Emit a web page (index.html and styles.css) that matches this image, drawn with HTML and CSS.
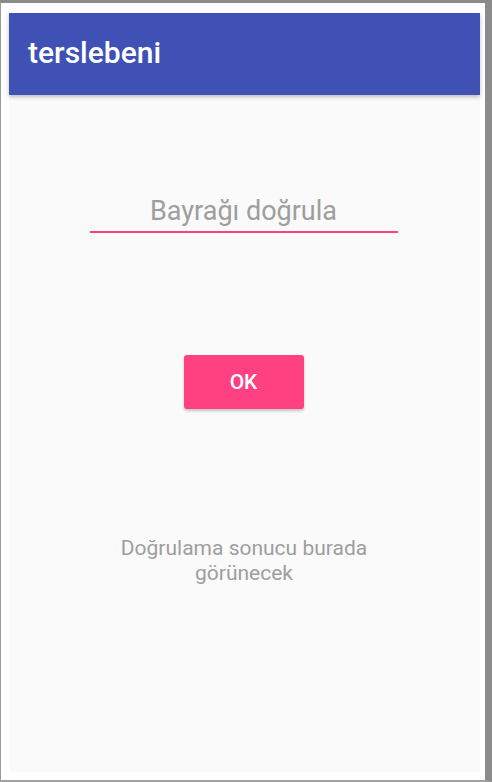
FILE: index.html
```html
<!DOCTYPE html>
<html lang="tr">
<head>
<meta charset="utf-8">
<title>terslebeni</title>
<link rel="stylesheet" href="styles.css">
</head>
<body>
<div class="frame">
  <div class="screen">
    <header class="appbar"><span class="title">terslebeni</span></header>
    <main class="content">
      <div class="field">Bayrağı doğrula</div>
      <button class="btn">OK</button>
      <p class="result">Doğrulama sonucu burada görünecek</p>
    </main>
  </div>
</div>
</body>
</html>
```
FILE: styles.css
```css
html, body {
  margin: 0;
  padding: 0;
  background: #ffffff;
}
body {
  font-family: Roboto, "Noto Sans", "Liberation Sans", sans-serif;
}
.frame {
  box-sizing: border-box;
  width: 492px;
  height: 782px;
  border-top: 3px solid #8a8a8a;
  border-left: 1px solid #9a9a9a;
  border-right: 7px solid #8c8c8c;
  border-bottom: 2px solid #a0a0a0;
  padding: 10px 5px 8px 8px;
  background: #ffffff;
}
.screen {
  height: 100%;
  display: flex;
  flex-direction: column;
  background: #fafafa;
}
.appbar {
  height: 82px;
  flex: 0 0 82px;
  background: #3f51b5;
  display: flex;
  align-items: center;
  padding-left: 19px;
  box-shadow: 0 2px 4px rgba(0, 0, 0, 0.25);
  position: relative;
  z-index: 1;
}
.title {
  color: #ffffff;
  font-size: 30px;
  font-weight: 500;
  line-height: 36px;
  margin-top: -2px;
}
.content {
  flex: 1;
  display: flex;
  flex-direction: column;
  align-items: center;
}
.field {
  box-sizing: border-box;
  width: 308px;
  margin-top: 101px;
  margin-left: -2px;
  padding-bottom: 5px;
  border-bottom: 2px solid #ff4081;
  text-align: center;
  font-size: 27px;
  line-height: 30px;
  color: #9e9e9e;
}
.btn {
  margin-top: 122px;
  width: 120px;
  height: 54px;
  border: none;
  border-radius: 3px;
  background: #ff4081;
  color: #ffffff;
  font-family: inherit;
  font-size: 21px;
  font-weight: 500;
  box-shadow: 0 2px 3px rgba(0, 0, 0, 0.22);
  margin-left: -2px;
}
.result {
  margin: 127px 0 0 -1px;
  width: 270px;
  text-align: center;
  font-size: 21px;
  line-height: 25px;
  color: #9e9e9e;
}
```
